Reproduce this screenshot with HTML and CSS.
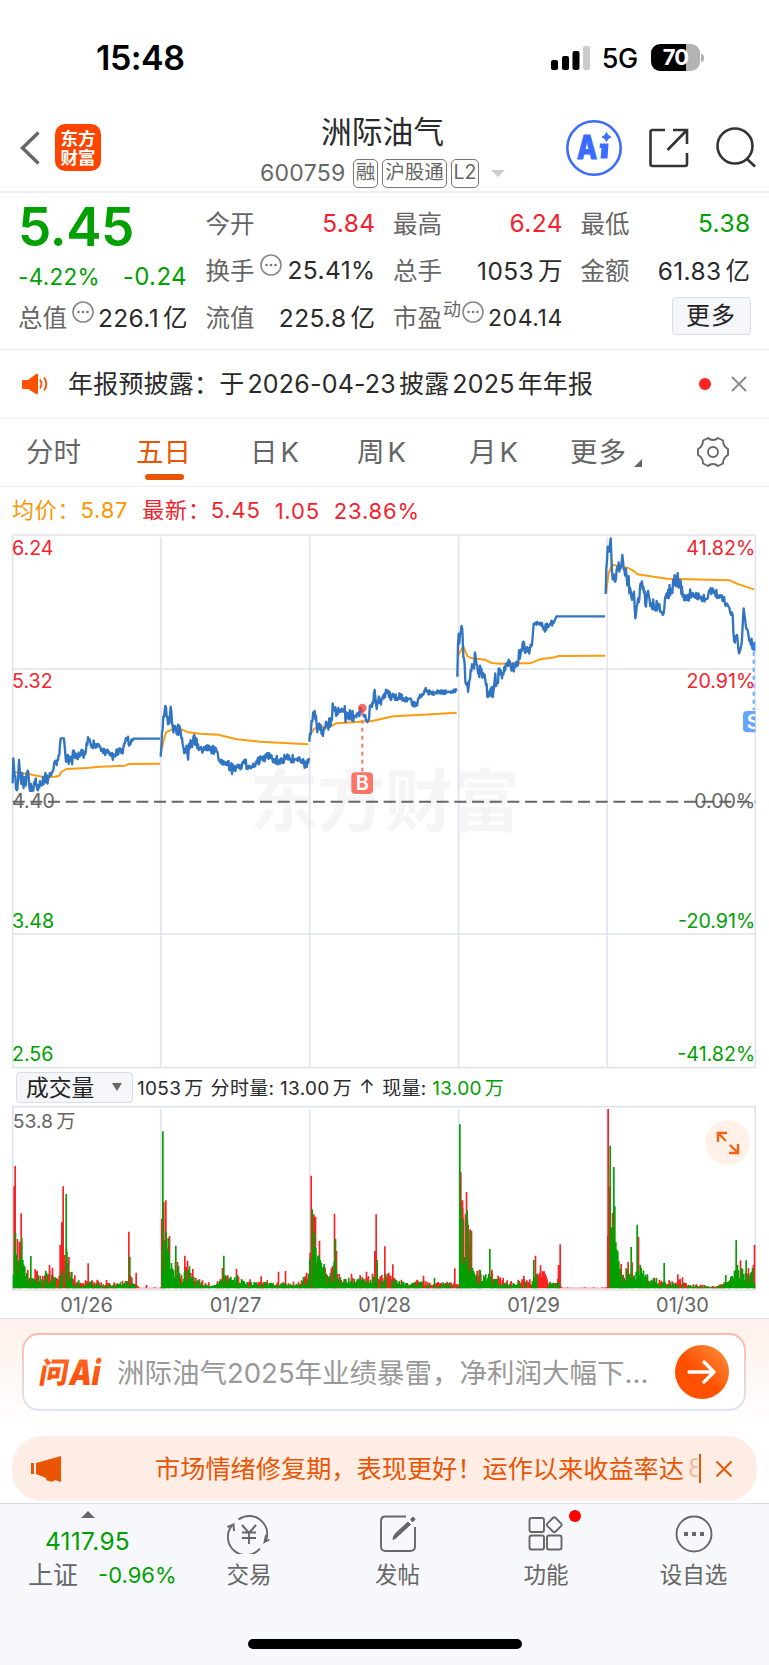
FILE: index.html
```html
<!DOCTYPE html>
<html lang="zh-CN">
<head>
  <meta charset="utf-8">
  <title>洲际油气 600759</title>
  <link rel="stylesheet" href="styles.css">
</head>
<body>
  <div class="statusbar">
    <span class="time">15:48</span>
    <div class="status-right">
      <svg class="signal" width="40" height="26" viewBox="0 0 40 26">
        <rect x="0" y="15" width="7" height="10" rx="2"/>
        <rect x="11" y="11" width="7" height="14" rx="2"/>
        <rect x="21.500" y="6" width="7" height="19" rx="2"/>
        <rect x="32" y="1" width="7" height="24" rx="2" fill="#ccc"/>
      </svg>
      <span class="network">5G</span>
      <div class="battery"><span>70</span></div>
    </div>
  </div>

  <header class="header">
    <div class="header-left">
      <svg width="20" height="34" viewBox="0 0 20 34" fill="none" stroke="#666" stroke-width="3.400"><path d="M18.500 1.500 L2.500 17 L18.500 32.500"/></svg>
      <div class="logo"><span>东方</span><span>财富</span></div>
    </div>
    <div class="header-title">
      <h1>洲际油气</h1>
      <div class="sub">
        <span class="code">600759</span>
        <span class="tag">融</span>
        <span class="tag tag-wide">沪股通</span>
        <span class="tag tag-l2">L2</span>
        <i class="caret"></i>
      </div>
    </div>
    <div class="header-right">
      <svg width="58" height="58" viewBox="0 0 58 58">
        <circle cx="29" cy="29" r="26.700" fill="#fff" stroke="#3a6cff" stroke-width="2.600"/>
        <text x="12" y="39.500" class="ai-text" textLength="20" lengthAdjust="spacingAndGlyphs">A</text>
        <path d="M38 24.500 H43.500 L42.500 39.500 H35.500 L36.500 29 H34.500 L35 24.500 Z" fill="#3a6cff"/>
        <path d="M41.500 13.500 Q42.500 17 46 18 Q42.500 19 41.500 22.500 Q40.500 19 37 18 Q40.500 17 41.500 13.500 Z" fill="#3a6cff" stroke="#3a6cff"/>
      </svg>
      <svg width="42" height="42" viewBox="0 0 42 42" fill="none" stroke="#333" stroke-width="2.600">
        <path d="M17 3 H4.500 Q2.500 3 2.500 5 V37 Q2.500 39 4.500 39 H37 Q39 39 39 37 V26"/>
        <path d="M25 3 H39 V17 M38.500 3.500 L19.500 23"/>
      </svg>
      <svg width="42" height="42" viewBox="0 0 42 42" fill="none" stroke="#333" stroke-width="2.600">
        <circle cx="20" cy="19" r="17.500"/>
        <path d="M31.500 31.500 L40 39.500"/>
      </svg>
    </div>
  </header>

  <section class="quote">
    <div class="col main-col">
      <div class="price">5.45</div>
      <div class="change"><span class="pct">-4.22%</span><span>-0.24</span></div>
      <div class="item"><label>总值</label><svg class="dots"><use href="#more"/></svg><b>226.1<em>亿</em></b></div>
    </div>
    <div class="col">
      <div class="item"><label>今开</label><b class="red">5.84</b></div>
      <div class="item"><label>换手</label><svg class="dots"><use href="#more"/></svg><b>25.41%</b></div>
      <div class="item"><label>流值</label><b>225.8<em>亿</em></b></div>
    </div>
    <div class="col">
      <div class="item"><label>最高</label><b class="red">6.24</b></div>
      <div class="item"><label>总手</label><b>1053<em>万</em></b></div>
      <div class="item"><label>市盈<sup>动</sup></label><svg class="dots dots-pe"><use href="#more"/></svg><b class="small">204.14</b></div>
    </div>
    <div class="col">
      <div class="item"><label>最低</label><b class="green">5.38</b></div>
      <div class="item"><label>金额</label><b>61.83<em>亿</em></b></div>
      <div class="item"><button class="more-btn">更多</button></div>
    </div>
  </section>

  <section class="notice">
    <svg width="26" height="22" viewBox="0 0 26 22">
      <path d="M1 7 H6 L14 1 Q16 0 16 2 V20 Q16 22 14 21 L6 16 H1 Q0 16 0 14 V9 Q0 7 1 7 Z" fill="#ff5000"/>
      <path d="M18 6.500 Q21 11 18 15.500 M22 4.500 Q26.500 11 22 17.500" fill="none" stroke="#ff5000" stroke-width="1.800"/>
    </svg>
    <p>年报预披露：于<span class="sp">2026-04-23</span>披露<span class="sp">2025</span>年年报</p>
    <i class="dot"></i>
    <svg class="close" width="16" height="16" viewBox="0 0 16 16" stroke="#888" stroke-width="1.800"><path d="M1 1 L15 15 M15 1 L1 15"/></svg>
  </section>

  <nav class="tabs">
    <a>分时</a>
    <a class="active">五日</a>
    <a>日<span>K</span></a>
    <a>周<span>K</span></a>
    <a>月<span>K</span></a>
    <a class="tab-more">更多</a>
    <svg width="34" height="34" viewBox="0 0 34 34" fill="none" stroke="#666" stroke-width="1.900">
      <path d="M12 3 Q14 5 17 5 Q20 5 22 3 L27 5.500 Q27 9 28.500 11 Q30 13 32 14 V20 Q30 21 28.500 23 Q27 25 27 28.500 L22 31 Q20 29 17 29 Q14 29 12 31 L7 28.500 Q7 25 5.500 23 Q4 21 2 20 V14 Q4 13 5.500 11 Q7 9 7 5.500 Z" stroke-linejoin="round"/>
      <circle cx="17" cy="17" r="5"/>
    </svg>
  </nav>

  <div class="legend">
    <span class="avg">均价：<b>5.87</b></span>
    <span class="last">最新：<b>5.45</b></span>
    <b>1.05</b>
    <b>23.86%</b>
  </div>

  <!-- user units are thirds of a pixel in both charts -->
  <svg class="chart" width="769" height="540" viewBox="0 0 2307 1620">
    <text class="watermark" x="750" y="888" textLength="810">东方财富</text>
    <path class="grid" d="M38 15 H2266 V1613 H38 Z M38 417 H2266 M38 1212 H2266"/>
    <path class="grid" d="M482 21 V1610 M929 21 V1610 M1376 21 V1610 M1822 21 V1610"/>
    <path class="zero" d="M38 815 H2266"/>
    <g id="priceLines"></g>
    <path d="M1087 545 V725" class="mark-b"/>
    <circle cx="1087" cy="534" r="13" fill="#f23c3c" fill-opacity=".75"/>
    <rect x="1054" y="727" width="65" height="65" rx="12" fill="#fd7565"/>
    <text class="mark-text" x="1087" y="780" text-anchor="middle">B</text>
    <path d="M2261 365 V540" class="mark-s"/>
    <path d="M2264 337 A13 13 0 0 0 2264 362 Z" fill="#2f7be8" stroke="#2f7be8" stroke-width="4"/>
    <path d="M2266 543 H2241 Q2229 543 2229 555 V595 Q2229 607 2241 607 H2266 Z" fill="#66a5ff"/>
    <svg x="2229" y="543" width="36" height="65"><text class="mark-text" x="11" y="53">S</text></svg>
    <g class="axis">
      <text x="36" y="74" class="up">6.24</text>
      <text x="36" y="474" class="up">5.32</text>
      <text x="36" y="833">4.40</text>
      <text x="36" y="1195" class="down">3.48</text>
      <text x="36" y="1594" class="down">2.56</text>
    </g>
    <g class="axis right">
      <text x="2266" y="74" class="up">41.82%</text>
      <text x="2266" y="474" class="up">20.91%</text>
      <text x="2266" y="833">0.00%</text>
      <text x="2266" y="1195" class="down">-20.91%</text>
      <text x="2266" y="1594" class="down">-41.82%</text>
    </g>
  </svg>

  <div class="vol-bar">
    <button class="vol-select">成交量<i></i></button>
    <span>1053<em>万</em></span>
    <span>分时量: 13.00<em>万</em></span>
    <span class="arrow">↑</span>
    <span>现量: <span class="green">13.00<em>万</em></span></span>
  </div>

  <div class="volume">
    <svg class="chart" width="769" height="188" viewBox="0 135 2307 564">
      <path class="grid" d="M38 140 H2266 V690 H38 Z M482 147 V690 M929 147 V690 M1376 147 V690 M1822 147 V690"/>
      <g id="volumeBars"></g>
      <text class="vol-max" x="38" y="204">53.8<tspan dx="10">万</tspan></text>
    </svg>
    <div class="expand">
      <svg width="24" height="24" viewBox="0 0 24 24" fill="none" stroke="#f06414" stroke-width="2.400"><path d="M2 11 V2 H11 M2 2 L10 10 M22 13 V22 H13 M22 22 L14 14"/></svg>
    </div>
  </div>
  <div class="dates"><span>01/26</span><span>01/27</span><span>01/28</span><span>01/29</span><span>01/30</span></div>

  <section class="ask">
    <div class="ask-box">
      <svg width="66" height="34" viewBox="0 0 66 34">
        <defs><linearGradient id="flame" x1="0" y1="0" x2="0" y2="1"><stop offset="0" stop-color="#ff6a2a"/><stop offset="1" stop-color="#ff4800"/></linearGradient></defs>
        <g transform="skewX(-10)">
          <text class="ask-cn" x="6" y="28">问</text>
          <text class="ask-ai" x="36" y="30" textLength="31" lengthAdjust="spacingAndGlyphs">Ai</text>
        </g>
      </svg>
      <p>洲际油气2025年业绩暴雷，净利润大幅下...</p>
      <div class="go">
        <svg width="30" height="26" viewBox="0 0 30 26" fill="none" stroke="#fff" stroke-width="3.400" stroke-linecap="round" stroke-linejoin="round"><path d="M2 13 H27 M17 3 L27 13 L17 23"/></svg>
      </div>
    </div>
  </section>

  <section class="promo">
    <svg width="31" height="28" viewBox="0 0 31 28" fill="#ea5504"><path d="M0 8 H3 V19 H0 Z M5 8 L30 1 V27 L24 25 Q22 28 18 26 Q15 26 15 23 L5 19 Z"/></svg>
    <p>市场情绪修复期，表现更好！运作以来收益率达</p>
    <span class="cut">8</span>
    <i class="line"></i>
    <svg width="18" height="18" viewBox="0 0 18 18" stroke="#ea5504" stroke-width="1.800"><path d="M1.500 1.500 L16.500 16.500 M16.500 1.500 L1.500 16.500"/></svg>
  </section>

  <footer class="bottom">
    <div class="bottom-nav">
      <div class="index">
        <i class="tri"></i>
        <strong>4117.95</strong>
        <div><span>上证</span><b>-0.96%</b></div>
      </div>
      <div class="nav-item">
        <svg width="44" height="40" viewBox="0 0 44 40" fill="none" stroke="#666" stroke-width="1.900">
          <path d="M11.500 5.500 A18 18 0 0 1 39 26.500 M33 34.500 A18 18 0 0 1 5 11.500"/>
          <path d="M0.500 13 L6.500 10.500 L7 17 M42.500 25.500 L37.500 28 L39 21"/>
          <path d="M15 11 L22 19 L29 11 M22 19 V30 M15 18.500 H29 M15 24 H29"/>
        </svg>
        <span>交易</span>
      </div>
      <div class="nav-item">
        <svg width="44" height="40" viewBox="0 0 44 40" fill="none" stroke="#666" stroke-width="1.900">
          <path d="M30 2.500 H9.500 Q5 2.500 5 7 V32.500 Q5 37 9.500 37 H34 Q39 37 39 32.500 V13"/>
          <path d="M17 25.500 Q17 22 19.500 19.500 L32 8 L34.500 10.500 L21.500 22.500 Q19 25 17 25.500 Z M34.500 5.500 L37 3 Q39 4 39 5.500 L36.500 8 Z" fill="#666" stroke-width="1"/>
        </svg>
        <span>发帖</span>
      </div>
      <div class="nav-item">
        <svg width="44" height="40" viewBox="0 0 44 40" fill="none" stroke="#666" stroke-width="1.900">
          <rect x="5.500" y="4" width="14.500" height="14" rx="2"/>
          <rect x="5.500" y="21.500" width="14.500" height="14" rx="2"/>
          <rect x="23" y="21.500" width="14.500" height="14" rx="2"/>
          <rect x="24.500" y="5" width="11.500" height="11.500" rx="2" transform="rotate(45 30.250 10.750)"/>
        </svg>
        <span>功能</span>
        <i class="badge"></i>
      </div>
      <div class="nav-item">
        <svg width="44" height="40" viewBox="0 0 44 40" fill="none" stroke="#666" stroke-width="1.900">
          <circle cx="22" cy="20" r="17.500"/>
          <path d="M12 20 H16 M20 20 H24 M28 20 H32" stroke-width="4"/>
        </svg>
        <span>设自选</span>
      </div>
    </div>
    <div class="home"></div>
  </footer>

  <svg width="0" height="0" class="defs">
    <symbol id="more" viewBox="0 0 22 22">
      <circle cx="11" cy="11" r="10" fill="none" stroke="#888" stroke-width="1.600"/>
      <g fill="#777"><circle cx="6.500" cy="11" r="1.300"/><circle cx="11" cy="11" r="1.300"/><circle cx="15.500" cy="11" r="1.300"/></g>
    </symbol>
  </svg>
  <script src="chart.js"></script>
</body>
</html>
```

FILE: styles.css
```css
* {
  box-sizing: border-box;
}

body {
  margin: 0;
  width: 769px;
  height: 1665px;
  overflow: hidden;
  background: #fff;
  color: #2a2a2a;
  font-family: Inter, "Noto Sans CJK SC", sans-serif;
}

p, h1 {
  margin: 0;
  font-weight: 400;
  white-space: nowrap;
}

svg {
  display: block;
  flex: none;
}

b, em, i {
  font-weight: 400;
  font-style: normal;
}

button {
  font-family: inherit;
  padding: 0;
}

.red { color: #f5222d; }
.green { color: #00a000; }
.defs { position: absolute; }

/* status bar */
.statusbar {
  display: flex;
  justify-content: space-between;
  align-items: center;
  height: 100px;
  padding: 15px 69px 0 96px;
  color: #000;
}

.time {
  font-size: 34px;
  font-weight: 600;
  letter-spacing: -0.5px;
}

.status-right {
  display: flex;
  align-items: center;
}

.network {
  margin: 1px 13px 0 11px;
  font-size: 27px;
  font-weight: 500;
  letter-spacing: -0.3px;
}

.battery {
  position: relative;
  width: 49px;
  height: 27px;
  border-radius: 9px;
  background: linear-gradient(90deg, #000 72%, #b3b3b3 72%);
  color: #fff;
  font-size: 22px;
  font-weight: 700;
  line-height: 27px;
  text-align: center;
  letter-spacing: -1px;
}

.battery::after {
  content: "";
  position: absolute;
  right: -4px;
  top: 10px;
  width: 3px;
  height: 8px;
  border-radius: 0 3px 3px 0;
  background: #b3b3b3;
}

/* header */
.header {
  display: grid;
  grid-template-columns: 238px 1fr 242px;
  height: 93px;
  border-bottom: 2px solid #eee;
}

.header-left {
  display: flex;
  align-items: center;
  padding: 2px 0 0 20px;
}

.logo {
  display: flex;
  flex-direction: column;
  justify-content: center;
  align-items: center;
  width: 46px;
  height: 47px;
  margin-left: 15px;
  border-radius: 10px;
  background: #ff4400;
  color: #fff;
  font-size: 17.5px;
  font-weight: 700;
  line-height: 19px;
}

.header-title {
  display: flex;
  flex-direction: column;
  align-items: center;
  padding-top: 12px;
}

h1 {
  font-size: 30.8px;
  line-height: 40px;
}

.sub {
  display: flex;
  align-items: center;
  height: 41px;
  padding-top: 1px;
}

.code {
  width: 93px;
  color: #666;
  font-size: 23px;
  letter-spacing: 0.3px;
}

.tag {
  width: 25px;
  height: 29px;
  margin-right: 4px;
  border: 1.5px solid #777;
  border-radius: 5px;
  color: #666;
  font-size: 19.5px;
  line-height: 25px;
  text-align: center;
}

.tag-wide {
  width: 65px;
}

.tag-l2 {
  width: 28px;
  margin-right: 12px;
}

.caret {
  border: 7px solid transparent;
  border-top-color: #ccc;
  border-bottom: 0;
}

.header-right {
  display: flex;
  align-items: center;
  justify-content: flex-end;
  gap: 25px;
  padding: 2px 12px 0 0;
}

.ai-text {
  fill: #3a6cff;
  stroke: #3a6cff;
  stroke-width: 1.2px;
  font-size: 32px;
  font-weight: 800;
}

/* quote */
.quote {
  display: grid;
  grid-template-columns: repeat(4, 168px);
  gap: 19.5px;
  height: 157px;
  padding: 6px 0 0 18px;
  border-bottom: 1px solid #eee;
}

.item {
  display: flex;
  align-items: center;
  height: 47px;
  font-size: 24.5px;
}

.item label {
  color: #666;
  white-space: nowrap;
}

.item b {
  margin-left: auto;
  margin-right: -2px;
  letter-spacing: 0.4px;
  white-space: nowrap;
}

.item b.small {
  margin-top: 3px;
  font-size: 23px;
  letter-spacing: 0.6px;
}

.item em {
  margin-left: 4px;
}

.item sup {
  display: inline-block;
  margin-left: 1px;
  font-size: 18px;
  line-height: 18px;
  transform: translateY(-2px);
}

.dots {
  width: 22px;
  height: 22px;
  margin: -9px -12px 0 5px;
}

.dots-pe {
  margin-left: 1px;
}

.price {
  height: 52px;
  margin-top: 2px;
  color: #00a000;
  font-size: 53px;
  font-weight: 600;
  line-height: 52px;
  letter-spacing: -0.4px;
}

.change {
  display: flex;
  justify-content: space-between;
  align-items: center;
  height: 40px;
  margin-right: -1px;
  padding-top: 7px;
  color: #00a000;
  font-size: 24px;
  letter-spacing: 0.4px;
}

.change .pct {
  font-size: 22.5px;
  letter-spacing: 0.3px;
}

.more-btn {
  width: 79px;
  height: 38px;
  margin: -2px -2px 0 auto;
  border: 1px solid #d9dde5;
  border-radius: 4px;
  background: #f5f6fa;
  color: #222;
  font-size: 24px;
  line-height: 32px;
  letter-spacing: 1px;
}

/* notice */
.notice {
  display: flex;
  align-items: center;
  height: 69px;
  padding: 0 22px;
  border-bottom: 2px solid #f5f5f5;
  font-size: 25px;
}

.notice p {
  margin-left: 20px;
  margin-top: -4px;
  letter-spacing: 0.2px;
}

.notice .sp {
  margin: 0 3px;
}

.notice .dot {
  width: 12px;
  height: 12px;
  margin-left: auto;
  border-radius: 50%;
  background: #f92424;
}

.notice .close {
  margin-left: 20px;
}

/* tabs */
.tabs {
  display: grid;
  grid-template-columns: 110px 114px 107px 112px 101px 126px 34px;
  align-items: center;
  height: 68px;
  padding: 0 0 5px 26px;
  border-bottom: 1px solid #eee;
  color: #666;
  font-size: 27.5px;
}

.tabs a {
  position: relative;
}

.tabs a span {
  margin-left: 3px;
}

.tabs svg {
  margin-top: 3px;
}

.tabs .active {
  color: #ea5504;
}

.tabs .active::after {
  content: "";
  position: absolute;
  left: 9px;
  bottom: -10px;
  width: 39px;
  height: 6px;
  border-radius: 3px;
  background: #ea5504;
}

.tabs .tab-more {
  letter-spacing: 1px;
}

.tab-more::after {
  content: "";
  position: absolute;
  left: 64px;
  bottom: 3px;
  border: 4px solid #666;
  border-top-color: transparent;
  border-left-color: transparent;
}

/* charts */
.legend {
  display: flex;
  align-items: center;
  height: 43px;
  padding: 5px 0 0 12px;
  gap: 14px;
  color: #f5222d;
  font-size: 22px;
  line-height: 30px;
  letter-spacing: 0.8px;
}

.legend .avg, .legend .last {
  margin-top: -2px;
}

.legend .avg {
  color: #ff9500;
}

.grid {
  fill: none;
  stroke: #e1e4ec;
  stroke-width: 5;
}

.zero {
  stroke: #666;
  stroke-width: 6;
  stroke-dasharray: 36 17;
}

.axis text {
  fill: #666;
  font-size: 59px;
}

.axis.right text {
  text-anchor: end;
}

.axis .up { fill: #f5222d; }
.axis .down { fill: #00a000; }

.watermark {
  fill: #f5f5f5;
  font-size: 204px;
  font-weight: 700;
}

.line-price, .line-avg {
  fill: none;
  stroke: #3175c2;
  stroke-width: 7;
  stroke-linejoin: round;
}

.line-avg {
  stroke: #ff9b0f;
  stroke-width: 6;
}

.mark-b, .mark-s {
  stroke: #fd7565;
  stroke-width: 6;
  stroke-dasharray: 12 12;
}

.mark-s {
  stroke: #66a5ff;
}

.mark-text {
  fill: #fff;
  font-size: 60px;
  font-weight: 600;
}

.vol-bar {
  display: flex;
  align-items: center;
  height: 35px;
  padding-left: 16px;
  font-size: 19px;
  letter-spacing: 0.32px;
  white-space: nowrap;
}

.vol-bar em {
  margin-left: 3px;
}

.vol-bar > span {
  margin-top: -2px;
  margin-right: 7px;
}

.vol-select {
  display: flex;
  align-items: center;
  width: 117px;
  height: 31px;
  margin-right: 4px;
  padding: 0 0 3px 9px;
  border: 1px solid #d9dde5;
  border-radius: 4px;
  background: #f5f6fa;
  color: #222;
  font-size: 22.8px;
}

.vol-select i {
  margin: 2px 0 0 18px;
  border: 5px solid transparent;
  border-top: 8px solid #666;
  border-bottom: 0;
}

.volume {
  position: relative;
}

.vol-max {
  fill: #666;
  font-size: 58px;
}

.bar-up { fill: #fc1f24; }
.bar-down { fill: #00a000; }

.expand {
  position: absolute;
  top: 15px;
  right: 19px;
  display: flex;
  align-items: center;
  justify-content: center;
  width: 45px;
  height: 45px;
  border-radius: 50%;
  background: #fff0e8;
}

.dates {
  display: grid;
  grid-template-columns: repeat(5, 149px);
  height: 26px;
  padding-left: 12px;
  border-bottom: 1px solid #dfe2e8;
  color: #666;
  font-size: 20px;
  line-height: 25px;
  text-align: center;
}

/* ask */
.ask {
  height: 117px;
  padding: 14px 23px 0 22px;
  background: linear-gradient(#fff1ec, #fff 95%);
}

.ask-box {
  display: flex;
  align-items: center;
  height: 78px;
  padding: 0 15px 0 13px;
  border: 2px solid transparent;
  border-radius: 17px;
  background: linear-gradient(#fff, #fff) padding-box, linear-gradient(#ffb9ae, #dce6f6) border-box;
}

.ask-cn, .ask-ai {
  fill: url(#flame);
  font-size: 29px;
  font-weight: 900;
}

.ask-ai {
  font-size: 35px;
}

.ask-box p {
  margin-left: 14px;
  margin-top: -3px;
  color: #999;
  font-size: 27.5px;
}

.go {
  display: flex;
  align-items: center;
  justify-content: center;
  width: 54px;
  height: 54px;
  margin-left: auto;
  border-radius: 50%;
  background: linear-gradient(45deg, #ff5000 45%, #ff9440);
}

/* promo */
.promo {
  display: flex;
  align-items: center;
  height: 65px;
  margin: 0 12px 2px;
  padding-left: 19px;
  border-radius: 30px;
  background: #fdede4;
  color: #ea5504;
  font-size: 25.2px;
}

.promo p {
  margin-left: 93px;
  margin-top: -4px;
}

.promo .cut {
  width: 9px;
  margin: -2px 2px 0 4px;
  overflow: hidden;
  opacity: .35;
}

.promo .line {
  width: 2px;
  height: 29px;
  margin-right: 14px;
  background: #ea5504;
}

/* bottom bar */
.bottom {
  height: 162px;
  border-top: 1px solid #dadde2;
  background: #f7f8fb;
}

.bottom-nav {
  display: grid;
  grid-template-columns: 175px 148px 149px 148px 147px;
  height: 135px;
}

.index {
  display: flex;
  flex-direction: column;
  align-items: center;
  color: #00a000;
}

.index .tri {
  margin-top: 7px;
  border: 7px solid transparent;
  border-top: 0;
  border-bottom-color: #666;
}

.index strong {
  margin-top: 7px;
  font-size: 24.5px;
  font-weight: 400;
  line-height: 33px;
  letter-spacing: 0.3px;
}

.index div {
  display: flex;
  align-items: center;
  gap: 20px;
  margin: -1px 0 0 28px;
  align-self: flex-start;
  font-size: 22px;
  line-height: 36px;
  white-space: nowrap;
}

.index div span {
  color: #666;
  font-size: 25px;
}

.nav-item {
  position: relative;
  display: flex;
  flex-direction: column;
  align-items: center;
  padding-top: 10px;
  color: #666;
  font-size: 22.5px;
}

.nav-item span {
  margin-top: 3px;
}

.badge {
  position: absolute;
  top: 6px;
  left: 97px;
  width: 12px;
  height: 12px;
  border-radius: 50%;
  background: #f00;
}

.home {
  width: 274px;
  height: 10px;
  margin: 0 auto;
  border-radius: 5px;
  background: #000;
}
```

FILE: chart.js
```javascript
var seed = 7;

function rand() {
  seed = (seed * 16807) % 2147483647;
  return seed / 2147483647;
}

// each point: x, y, jitter applied until the next point
var prices = [
  [[38,760,0],[40,685,4],[44,740,14],[52,778,8],[57,690,4],[62,745,14],[75,758,12],[84,722,8],[88,772,10],[100,782,9],[107,745,5],[112,778,10],[122,760,12],[134,745,14],[147,742,14],[158,725,14],[170,705,18],[178,675,6],[182,625,0],[192,625,4],[198,695,14],[208,682,14],[225,684,10],[240,674,9],[255,674,6],[260,638,12],[266,632,12],[275,652,14],[285,642,8],[295,642,8],[305,658,8],[320,668,8],[345,680,8],[358,655,6],[368,670,6],[375,640,5],[380,625,8],[390,640,3],[400,626,0],[480,626,0]],
  [[482,680,6],[486,610,12],[494,545,14],[502,560,18],[508,580,12],[512,530,6],[518,590,12],[530,612,18],[540,595,14],[550,650,12],[562,668,16],[574,645,10],[583,615,14],[592,655,8],[605,660,8],[618,648,8],[630,660,10],[648,655,10],[660,690,12],[675,698,10],[690,708,10],[700,722,7],[715,710,6],[725,714,6],[733,690,8],[742,710,4],[755,712,8],[770,700,8],[785,682,9],[810,684,9],[835,694,8],[860,685,9],[885,688,7],[905,692,7],[918,708,6],[927,684,3]],
  [[928,635,0],[930,610,12],[942,550,18],[950,585,16],[958,580,18],[969,618,10],[978,575,14],[990,590,12],[996,570,3],[998,520,8],[1004,542,10],[1030,545,18],[1045,555,12],[1062,560,9],[1085,542,9],[1100,572,12],[1112,530,7],[1120,520,10],[1124,480,7],[1128,520,12],[1145,505,10],[1153,492,7],[1160,488,9],[1180,500,9],[1192,510,9],[1198,490,8],[1210,505,6],[1225,508,6],[1247,528,6],[1258,505,7],[1275,480,5],[1290,490,4],[1315,487,4],[1350,485,3],[1370,482,0]],
  [[1372,440,0],[1374,345,16],[1382,310,12],[1387,298,6],[1390,380,18],[1398,462,14],[1406,470,9],[1412,420,12],[1420,405,16],[1427,380,8],[1434,430,12],[1442,418,9],[1456,450,9],[1464,500,7],[1470,485,10],[1480,488,5],[1484,450,14],[1492,460,10],[1498,415,8],[1506,445,10],[1520,405,12],[1530,395,10],[1537,420,10],[1550,395,14],[1562,370,8],[1570,335,8],[1577,368,9],[1590,355,10],[1596,345,6],[1601,282,3],[1622,278,7],[1630,298,7],[1650,282,6],[1663,275,3],[1669,259,0],[1815,259,0]],
  [[1817,192,0],[1819,115,10],[1823,50,6],[1827,65,6],[1832,25,6],[1836,125,12],[1846,155,12],[1852,110,12],[1862,115,12],[1867,75,9],[1873,120,14],[1884,150,14],[1894,200,10],[1902,185,8],[1906,265,6],[1914,205,16],[1924,160,9],[1930,170,12],[1938,230,9],[1942,190,9],[1955,230,14],[1976,225,7],[1988,255,9],[2000,190,14],[2015,180,12],[2026,145,16],[2040,150,12],[2048,200,9],[2062,205,12],[2075,190,8],[2100,200,7],[2118,207,6],[2130,185,9],[2140,180,10],[2158,203,8],[2170,210,8],[2186,230,8],[2198,255,12],[2203,335,8],[2211,315,10],[2217,370,6],[2225,340,4],[2231,235,3],[2237,285,7],[2250,330,8],[2262,350,3]]
];

var averages = [
  [[38,725],[60,729],[85,732],[130,741],[165,740],[178,737],[184,726],[200,717],[260,714],[300,710],[375,707],[388,702],[480,701]],
  [[482,668],[490,635],[498,607],[515,599],[545,599],[565,607],[600,611],[655,614],[710,628],[780,635],[925,643]],
  [[930,615],[943,596],[958,590],[990,590],[1008,580],[1060,577],[1120,572],[1180,559],[1270,554],[1370,548]],
  [[1376,375],[1382,362],[1390,350],[1402,378],[1412,384],[1455,389],[1475,399],[1500,401],[1590,400],[1620,388],[1665,382],[1675,378],[1815,377]],
  [[1818,190],[1826,130],[1836,104],[1855,108],[1885,114],[1903,124],[1912,133],[2000,146],[2190,151],[2210,161],[2262,178]]
];

function addPath(parent, d, cls) {
  var path = document.createElementNS("http://www.w3.org/2000/svg", "path");
  path.setAttribute("d", d);
  path.setAttribute("class", cls);
  parent.appendChild(path);
}

function priceLine(points) {
  var d = "M" + points[0][0] + " " + points[0][1];
  var side = 1;
  for (var i = 1; i < points.length; i++) {
    var a = points[i - 1], b = points[i];
    var steps = Math.max(1, Math.round((b[0] - a[0]) / 2.2));
    for (var s = 1; s <= steps; s++) {
      var t = s / steps;
      side = rand() < 0.75 ? -side : side;
      var jitter = s < steps ? side * rand() * a[2] * 1.6 : 0;
      d += " L" + (a[0] + (b[0] - a[0]) * t).toFixed(1) + " " + (a[1] + (b[1] - a[1]) * t + jitter).toFixed(1);
    }
  }
  return d;
}

var priceLines = document.getElementById("priceLines");
for (var i = 0; i < prices.length; i++) {
  addPath(priceLines, "M" + averages[i].join(" L"), "line-avg");
  addPath(priceLines, priceLine(prices[i]), "line-price");
}

// volume outline: x, height, share of red bars
var outline = [
  [38,90,.5],[44,180,.3],[50,135,.2],[66,90,.3],[78,50,.3],[100,42,.4],[120,38,.7],[135,50,.5],[160,40,.6],[175,30,.5],[185,60,.8],[198,100,.3],[210,55,.3],[225,28,.4],[245,14,.4],[262,22,.5],[280,22,.4],[310,12,.5],[350,14,.5],[375,22,.5],[395,30,.5],[405,14,.9],[413,2,1],[480,2,1],
  [484,240,.4],[496,215,.3],[506,120,.4],[515,75,.3],[530,68,.2],[545,40,.3],[560,85,.3],[570,45,.4],[590,30,.4],[615,12,.3],[650,16,.3],[668,55,.1],[678,30,.5],[710,38,.4],[730,20,.4],[760,20,.5],[820,16,.5],[860,14,.4],[890,16,.3],[918,40,.4],
  [928,110,.6],[934,230,.4],[945,150,.3],[955,100,.3],[970,85,.3],[980,45,.4],[1000,85,.6],[1015,50,.3],[1035,28,.3],[1060,32,.4],[1100,28,.4],[1120,40,.7],[1140,26,.4],[1155,45,.6],[1175,26,.6],[1190,24,.3],[1220,16,.3],[1260,20,.6],[1300,12,.5],[1345,20,.7],[1368,10,.8],[1374,8,.9],
  [1377,290,.3],[1388,200,.3],[1402,220,.3],[1412,140,.4],[1420,65,.3],[1440,40,.3],[1465,50,.3],[1480,40,.4],[1495,25,.4],[1540,16,.7],[1575,26,.7],[1595,20,.3],[1610,60,.9],[1630,44,.8],[1642,20,.3],[1665,14,.7],[1675,30,.9],[1682,2,1],[1818,2,1],
  [1822,250,.6],[1830,230,.3],[1842,150,.3],[1858,70,.3],[1870,35,.3],[1885,70,.3],[1900,50,.3],[1915,85,.2],[1925,45,.3],[1955,35,.4],[1990,18,.3],[2035,22,.7],[2060,10,.5],[2140,6,.5],[2172,15,.3],[2195,40,.5],[2210,70,.2],[2240,40,.3],[2262,70,.2]
];

var spikes = [
  [42,306,1],[45,367,1],[63,225,1],[65,150,0],[92,97,0],[105,58,1],[148,70,1],[157,62,1],[180,130,1],[185,198,1],[189,306,1],[198,283,0],[264,75,1],[319,25,1],[386,170,1],[389,95,0],[408,47,1],[439,10,1],
  [488,471,0],[491,258,1],[497,264,1],[527,128,0],[554,98,1],[578,58,1],[671,98,0],[709,58,1],[783,36,1],[835,50,1],[856,52,1],
  [933,338,1],[936,237,0],[941,222,1],[946,215,1],[958,143,1],[1003,224,1],[1006,148,0],[1009,112,1],[1054,44,1],[1099,50,1],[1124,112,1],[1128,222,1],[1131,85,0],[1154,126,1],[1178,72,1],[1270,38,1],[1303,32,0],[1364,60,1],
  [1379,492,0],[1382,348,1],[1387,264,1],[1401,234,0],[1410,177,1],[1440,55,0],[1469,118,0],[1475,56,1],[1571,38,1],[1601,85,0],[1606,98,1],[1675,70,1],[1680,132,1],
  [1824,538,1],[1830,428,0],[1837,226,1],[1841,364,0],[1844,246,0],[1893,124,0],[1911,191,0],[1915,154,1],[1930,54,0],[1992,76,0],[2033,42,1],[2047,33,1],[2177,40,0],[2208,145,0],[2221,84,1],[2238,84,0],[2254,50,0],[2263,130,1]
];

var red = "", green = "";

function bar(x, h, isRed) {
  var d = "M" + x + " " + (685 - h).toFixed(0) + "h5V685h-5Z";
  if (isRed) {
    red += d;
  } else {
    green += d;
  }
}

for (var k = 1; k < outline.length; k++) {
  var from = outline[k - 1], to = outline[k];
  for (var x = from[0]; x < to[0]; x += 3) {
    var t = (x - from[0]) / (to[0] - from[0]);
    var h = (from[1] + (to[1] - from[1]) * t) * (0.45 + rand() * 0.65);
    var isRed = rand() < from[2];
    bar(x, isRed ? h * 1.25 : h, isRed);
    if (isRed && from[2] < 0.6) {
      bar(x, h * 0.35, false);
    }
  }
}
for (var n = 0; n < spikes.length; n++) {
  bar(spikes[n][0] - 2, spikes[n][1], spikes[n][2] === 1);
}

var volumeBars = document.getElementById("volumeBars");
addPath(volumeBars, red, "bar-up");
addPath(volumeBars, green, "bar-down");
```
